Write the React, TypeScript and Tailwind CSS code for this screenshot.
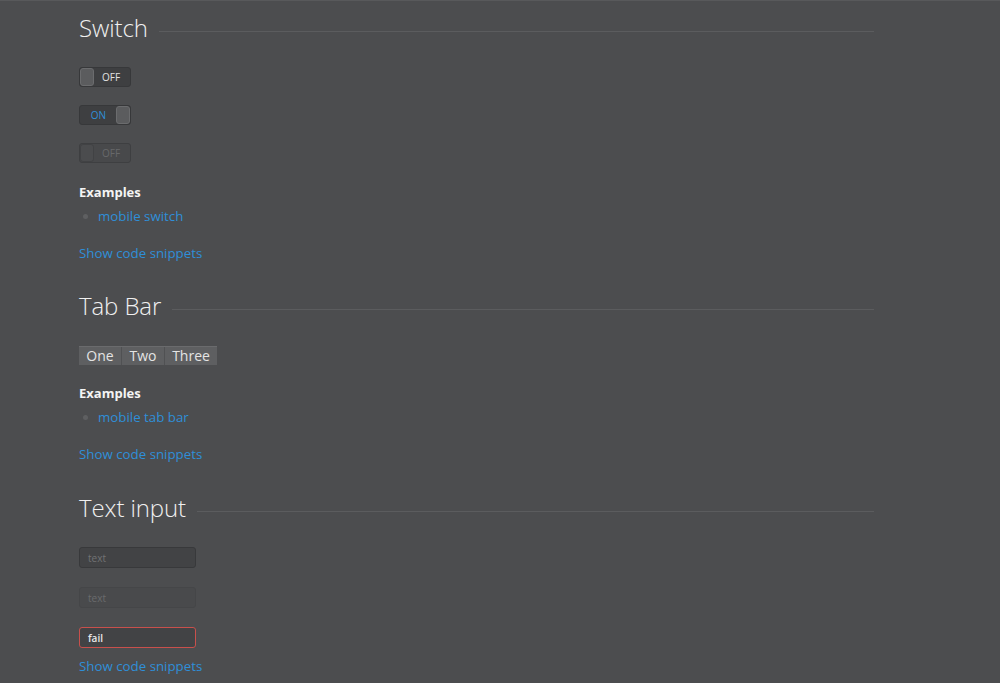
import React from "react";

const font = { fontFamily: '"Open Sans", "Noto Sans", sans-serif' };

function Heading({ children, mt }: { children: React.ReactNode; mt: string }) {
  return (
    <div className={`flex items-center ${mt}`}>
      <h2 className="text-[24px] leading-[32px] font-light text-[#f0f0f0] tracking-[-0.1px]">{children}</h2>
      <div className="flex-1 h-px bg-[#5b5c5e] ml-[11px] mt-[6px]" />
    </div>
  );
}

function Switch({ on, disabled, mt }: { on?: boolean; disabled?: boolean; mt: string }) {
  return (
    <div
      className={`${mt} w-[52px] h-[20px] rounded-[3px] border flex items-stretch ${
        disabled ? "border-[#3e3f41] bg-[#48494b]" : "border-[#37383a] bg-[#3e3f41]"
      } ${on ? "flex-row-reverse" : "flex-row"}`}
    >
      <div
        className={`w-[14px] rounded-[3px] border ${
          disabled ? "bg-[#4b4c4e] border-[#414244]" : "bg-[#5b5c5e] border-[#6b6c6e]"
        }`}
      />
      <div
        className={`flex-1 flex items-center justify-center text-[10px] font-medium leading-none pr-[2px] ${
          on ? "text-[#2f8fd8] pl-[3px]" : disabled ? "text-[#67686a]" : "text-[#e2e2e2]"
        }`}
      >
        {on ? "ON" : "OFF"}
      </div>
    </div>
  );
}

function Examples({ item, mt }: { item: string; mt: string }) {
  return (
    <>
      <div className={`${mt} text-[13px] font-bold text-[#f4f4f4] leading-[18px]`}>Examples</div>
      <ul className="mt-[6px] flex flex-col">
        <li className="flex items-center text-[13.3px] leading-[18px]">
          <span className="w-[5px] h-[5px] rounded-full bg-[#5e5f61] ml-[4px] mr-[10px]" />
          <a className="text-[#2f8fd8]">{item}</a>
        </li>
      </ul>
    </>
  );
}

function Snippets({ mt }: { mt: string }) {
  return <a className={`${mt} block text-[13.3px] leading-[18px] text-[#2f8fd8]`}>Show code snippets</a>;
}

function Input({ variant, mt }: { variant: "normal" | "disabled" | "fail"; mt: string }) {
  const cls =
    variant === "normal"
      ? "bg-[#424345] border-[#38393b] text-[#717274]"
      : variant === "disabled"
      ? "bg-[#494a4c] border-[#454648] text-[#6a6b6d]"
      : "bg-[#424345] border-[#c8504c] text-[#e8e8e8] font-semibold";
  return (
    <div className={`${mt} w-[117px] h-[21px] rounded-[3px] border ${cls} text-[10px] leading-none flex items-center pl-[8px]`}>
      {variant === "fail" ? "fail" : "text"}
    </div>
  );
}

export default function App() {
  return (
    <div className="min-h-[683px] bg-[#4c4d4f] border-t border-[#58595b] overflow-hidden" style={font}>
      <div className="ml-[79px] w-[795px] flex flex-col items-start">
        <div className="w-full">
          <Heading mt="mt-[11px]">Switch</Heading>
        </div>
        <Switch mt="mt-[23px]" />
        <Switch on mt="mt-[18px]" />
        <Switch disabled mt="mt-[18px]" />
        <Examples item="mobile switch" mt="mt-[20px]" />
        <Snippets mt="mt-[19px]" />
        <div className="w-full">
          <Heading mt="mt-[28px]">Tab Bar</Heading>
        </div>
        <div className="mt-[24px] flex h-[19px] bg-[#5e5f61] border-t border-[#6a6b6d]">
          {["One", "Two", "Three"].map((t, i) => (
            <div
              key={t}
              className={`flex items-center justify-center text-[14px] leading-none text-[#e4e4e4] ${
                i === 0 ? "w-[42px]" : i === 1 ? "w-[43px] border-l border-[#505153]" : "w-[53px] border-l border-[#505153]"
              }`}
            >
              {t}
            </div>
          ))}
        </div>
        <Examples item="mobile tab bar" mt="mt-[19px]" />
        <Snippets mt="mt-[19px]" />
        <div className="w-full">
          <Heading mt="mt-[29px]">Text input</Heading>
        </div>
        <Input variant="normal" mt="mt-[23px]" />
        <Input variant="disabled" mt="mt-[19px]" />
        <Input variant="fail" mt="mt-[19px]" />
        <Snippets mt="mt-[9px]" />
      </div>
    </div>
  );
}
